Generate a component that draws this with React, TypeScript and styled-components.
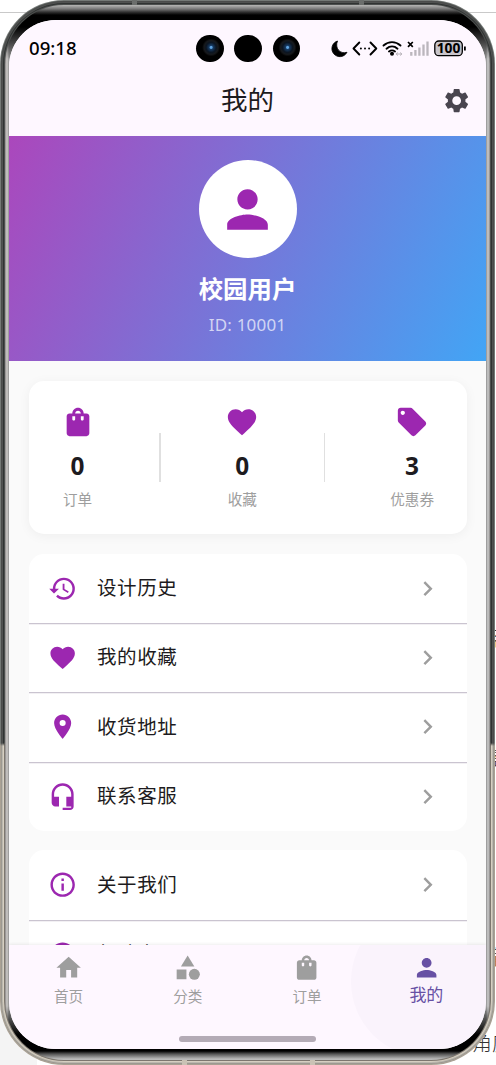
import React from "react";
import styled, { createGlobalStyle } from "styled-components";
import {
  MdPerson, MdShoppingBag, MdFavorite, MdLocalOffer, MdHistory, MdLocationOn,
  MdInfoOutline, MdHome, MdCategory, MdSettings, MdChevronRight, MdHelpOutline,
} from "react-icons/md";

const Global = createGlobalStyle`
  * { box-sizing: border-box; }
  body { margin: 0; background: #fff; overflow: hidden; font-family: "Noto Sans", "Noto Sans CJK SC", sans-serif; color: #1d1b20; }
  svg { display: block; flex: none; }
`;

const Desktop = styled.div`
  position: relative;
  width: 496px;
  height: 1065px;
  overflow: hidden;
  background: linear-gradient(#fff 12px, #c9c9c9 12px, #c9c9c9 13px, #fff 13px);
`;

const BackText = styled.span<{ $top: number; $left?: number }>`
  position: absolute;
  top: ${(p) => p.$top}px;
  left: ${(p) => p.$left ?? 491}px;
  font: 300 20px/24px "Noto Sans CJK SC", sans-serif;
  color: #333;
  white-space: nowrap;
`;

const BackPanel = styled.div`
  position: absolute;
  left: 0;
  bottom: 0;
  width: 37px;
  height: 320px;
  background: #f4f4f4;
`;

const Rim = styled.div`
  position: relative;
  width: 495px;
  height: 1065px;
  padding: 1px;
  border-radius: 64px;
  background: linear-gradient(#747976 0 743px, #aaa193 746px);
`;

const Metal = styled.div`
  height: 100%;
  padding: 3px;
  border-radius: 63px;
  background: linear-gradient(#303332 0 742px, #d6cfc1 745px);
  box-shadow: inset 0 0 0 1px rgba(60, 60, 60, 0.25), inset 0 0 0 2px rgba(140, 140, 140, 0.35);
`;

const Edge = styled.div`
  height: 100%;
  padding: 1px;
  border-radius: 60px;
  background: linear-gradient(#4c4f4e 0 738px, #7d776f 742px);
`;

const Glass = styled.div`
  height: 100%;
  padding: 15px 4px 11px;
  border-radius: 59px;
  background: linear-gradient(#b7b7b5, #777 4px, #333 7px, #000 10px, #000 22px, transparent 54px, transparent 1001px, #000 1030px, #000 1046px, #555 1049px, #bbb 1054px),
    linear-gradient(90deg, #8a8887, #d0cdcb 2px, #8f8f8f 4px, #8f8f8f calc(100% - 4px), #ccc calc(100% - 2px), #8a8887);
`;

const Antenna = styled.i<{ $x: number; $bottom?: boolean }>`
  position: absolute;
  left: ${(p) => p.$x}px;
  ${(p) => (p.$bottom ? "bottom: 0; background: #c9c2b4;" : "top: 0; background: #6b6e6c;")}
  width: 5px;
  height: 5px;
`;

const Screen = styled.div`
  height: 1029px;
  display: flex;
  flex-direction: column;
  overflow: hidden;
  border-radius: 47px;
  background: #fafafa;
`;

const StatusBar = styled.div`
  height: 57px;
  flex: none;
  display: grid;
  grid-template-columns: 187px 105px 1fr;
  align-items: center;
  padding-right: 20px;
  background: #fef7ff;
`;

const Clock = styled.div`
  padding: 0 0 2px 20px;
  font-size: 18.6px;
  font-weight: 500;
  line-height: 24px;
  color: #000;
`;

const Cameras = styled.div`
  display: flex;
  gap: 10.8px;
`;

const Lens = styled.i<{ $lit?: boolean }>`
  width: 27.5px;
  height: 27.5px;
  flex: none;
  border-radius: 50%;
  background: ${(p) => p.$lit
    ? "radial-gradient(circle at 54% 46%, #5fa3e0 0 1px, #173b63 2px, #0b1522 5px, #17191c 7px, #000 9px)"
    : "#000"};
`;

const Indicators = styled.div`
  display: flex;
  justify-content: flex-end;
  align-items: center;
  padding-bottom: 1px;
`;

const AppBar = styled.div`
  height: 58.5px;
  flex: none;
  display: grid;
  grid-template-columns: 60px 1fr 60px;
  align-items: center;
  background: #fef7ff;
  color: #49454f;
`;

const AppTitle = styled.h1`
  grid-column: 2;
  margin: 0 0 13px;
  text-align: center;
  font-size: 26.5px;
  line-height: 36px;
  font-weight: 400;
  color: #1d1b20;
`;

const SettingsButton = styled.div`
  margin: 0 0 11px 16px;
`;

const Profile = styled.section`
  height: 225.5px;
  flex: none;
  display: flex;
  flex-direction: column;
  align-items: center;
  padding-top: 24.5px;
  background: linear-gradient(115.3deg, #ab47bc, #42a5f5);
  color: #fff;
`;

const Avatar = styled.div`
  width: 98px;
  height: 98px;
  display: grid;
  place-items: center;
  border-radius: 50%;
  background: #fff;
  color: #9c27b0;
`;

const UserName = styled.div`
  margin-top: 14px;
  font-size: 24.4px;
  line-height: 34px;
  font-weight: 700;
`;

const UserId = styled.div`
  margin-top: 7px;
  font-size: 17px;
  line-height: 24px;
  letter-spacing: 0.2px;
  color: rgba(255, 255, 255, 0.7);
`;

const Content = styled.main`
  flex: 1;
  min-height: 0;
  overflow: hidden;
  display: flex;
  flex-direction: column;
  gap: 19.5px;
  padding: 19.5px 19.5px 0;
`;

const Stats = styled.section`
  height: 153.5px;
  flex: none;
  display: flex;
  justify-content: space-between;
  align-items: center;
  padding: 0 32.5px 0 32px;
  border-radius: 15px;
  background: #fff;
  box-shadow: 0 2px 12px rgba(0, 0, 0, 0.05);
`;

const Stat = styled.div`
  display: flex;
  flex-direction: column;
  align-items: center;
  color: #9c27b0;
`;

const StatValue = styled.b`
  margin-top: 9px;
  font-size: 24.4px;
  line-height: 35px;
  color: #1d1b20;
`;

const StatLabel = styled.span`
  margin-top: 5px;
  font-size: 14.6px;
  line-height: 22px;
  color: #9e9e9e;
`;

const StatDivider = styled.i`
  width: 1.2px;
  height: 49px;
  background: #e0e0e0;
`;

const Menu = styled.section`
  flex: none;
  border-radius: 15px;
  background: #fff;
  overflow: hidden;
`;

const MenuRow = styled.div`
  height: 69.35px;
  display: grid;
  grid-template-columns: 49px 1fr 30px;
  align-items: center;
  padding: 0 23.6px 0 19.5px;
  color: #9c27b0;
  & + & { box-shadow: inset 0 1.3px #cac4d0; }
`;

const MenuLabel = styled.span`
  margin-top: -1.6px;
  font-size: 19.5px;
  line-height: 29px;
  letter-spacing: 0.6px;
  color: #1d1b20;
`;

const Chevron = styled(MdChevronRight)`
  color: #9e9e9e;
`;

const TabBar = styled.nav`
  position: relative;
  height: 104.5px;
  flex: none;
  display: grid;
  grid-template-columns: repeat(4, 1fr);
  overflow: hidden;
  background: #fef7ff;
  box-shadow: 0 -1px 3px rgba(0, 0, 0, 0.07);
`;

const Tab = styled.div<{ $active?: boolean }>`
  position: relative;
  display: flex;
  flex-direction: column;
  align-items: center;
  padding-top: 8.5px;
  color: ${(p) => (p.$active ? "#6750a4" : "#9e9e9e")};
  font-size: ${(p) => (p.$active ? 17 : 14.6)}px;
  line-height: 24px;
`;

const TabLabel = styled.span<{ $active?: boolean }>`
  margin-top: ${(p) => (p.$active ? 1 : 1.5)}px;
`;

const Ripple = styled.i`
  position: absolute;
  top: -39px;
  right: -16px;
  width: 151px;
  height: 151px;
  border-radius: 50%;
  background: rgba(90, 80, 130, 0.025);
`;

const HomeHandle = styled.i`
  position: absolute;
  left: 170px;
  bottom: 7.5px;
  width: 137px;
  height: 6px;
  border-radius: 3px;
  background: #b4abb6;
`;

const Headset = ({ size }: { size: number }) => (
  <svg width={size} height={size} viewBox="0 0 24 24" fill="currentColor">
    <path d="M12 1a9 9 0 0 0-9 9v7c0 1.660 1.340 3 3 3h3v-8H5v-2c0-3.870 3.130-7 7-7s7 3.130 7 7v2h-4v8h4v1h-7v2h6c1.660 0 3-1.340 3-3V10a9 9 0 0 0-9-9z" />
  </svg>
);

const StatusGlyphs = () => (
  <svg width="138" height="22" viewBox="328 37 138 22">
    <path d="M337.500 41A8 8 0 1 0 347 52.300C340 54.500 334.500 48 337.500 41Z" fill="#000" stroke="#000" strokeWidth="0.800" strokeLinejoin="round" />
    <g fill="none" stroke="#000" strokeWidth="1.9" strokeLinecap="round" strokeLinejoin="round">
      <path d="m359.300 42.500-5.800 6 5.800 6M370.500 42.500l5.800 6-5.800 6" />
      <path d="M383.500 45.500c5-4.500 12-4.500 17 0M386.500 48.700c3.300-2.900 7.800-2.900 11 0M389 51.500c2-1.500 4-1.500 6 0" />
    </g>
    <g fill="#000"><circle cx="360.900" cy="48.500" r="1" /><circle cx="365" cy="48.500" r="1" /><circle cx="369.100" cy="48.500" r="1" /><circle cx="392" cy="53.800" r="2" /></g>
    <path d="M396 54h6m-4-1.500-2 1.500 2 1.500m2-3 2 1.500-2 1.500" stroke="#bbb6bd" fill="none" />
    <path d="m408 42 4.800 4.800m0-4.800-4.800 4.800" stroke="#000" strokeWidth="1.700" />
    <path d="M411.300 52v3.800M415.400 50v5.800M419.400 47.500v8.300M423.500 44.500v11.300M427.500 41.500v14.300" stroke="#bbb6bd" strokeWidth="2.300" />
    <rect x="434.800" y="41" width="27.500" height="14.700" rx="4" fill="#c8c4ca" stroke="#000" strokeWidth="1.300" />
    <path d="M464.900 46.500v4" stroke="#000" strokeWidth="1.800" />
    <text x="448.500" y="53.400" textAnchor="middle" fontFamily="Noto Sans" fontWeight="700" fontSize="13.800" fill="#000">100</text>
  </svg>
);

const stats = [
  { icon: MdShoppingBag, value: 0, label: "订单" },
  { icon: MdFavorite, value: 0, label: "收藏" },
  { icon: MdLocalOffer, value: 3, label: "优惠券" },
];

const menus = [
  [
    { icon: MdHistory, label: "设计历史" },
    { icon: MdFavorite, label: "我的收藏" },
    { icon: MdLocationOn, label: "收货地址" },
    { icon: Headset, label: "联系客服" },
  ],
  [
    { icon: MdInfoOutline, label: "关于我们" },
    { icon: MdHelpOutline, label: "帮助中心" },
  ],
];

const tabs = [
  { icon: MdHome, label: "首页" },
  { icon: MdCategory, label: "分类" },
  { icon: MdShoppingBag, label: "订单" },
  { icon: MdPerson, label: "我的", active: true },
];

export default function App() {
  return (
    <Desktop>
      <Global />
      <BackPanel />
      <BackText $top={626}>客</BackText>
      <BackText $top={745}>善</BackText>
      <BackText $top={945}>管</BackText>
      <BackText $top={1031} $left={472}>角度</BackText>
      <Rim><Metal><Edge><Glass>
        <Screen>
          <StatusBar>
            <Clock>09:18</Clock>
            <Cameras><Lens $lit /><Lens /><Lens $lit /></Cameras>
            <Indicators><StatusGlyphs /></Indicators>
          </StatusBar>
          <AppBar>
            <AppTitle>我的</AppTitle>
            <SettingsButton><MdSettings size={29.3} /></SettingsButton>
          </AppBar>
          <Profile>
            <Avatar><MdPerson size={61} /></Avatar>
            <UserName>校园用户</UserName>
            <UserId>ID: 10001</UserId>
          </Profile>
          <Content>
            <Stats>
              {stats.map(({ icon: Icon, value, label }, i) => (
                <React.Fragment key={label}>
                  {i > 0 && <StatDivider />}
                  <Stat>
                    <Icon size={34} />
                    <StatValue>{value}</StatValue>
                    <StatLabel>{label}</StatLabel>
                  </Stat>
                </React.Fragment>
              ))}
            </Stats>
            {menus.map((rows, i) => (
              <Menu key={i}>
                {rows.map(({ icon: Icon, label }) => (
                  <MenuRow key={label}>
                    <Icon size={29.3} />
                    <MenuLabel>{label}</MenuLabel>
                    <Chevron size={29.3} />
                  </MenuRow>
                ))}
              </Menu>
            ))}
          </Content>
          <TabBar>
            <Ripple />
            {tabs.map(({ icon: Icon, label, active }) => (
              <Tab key={label} $active={active}>
                <Icon size={29.3} />
                <TabLabel $active={active}>{label}</TabLabel>
              </Tab>
            ))}
            <HomeHandle />
          </TabBar>
        </Screen>
      </Glass></Edge></Metal>
        <Antenna $x={132} />
        <Antenna $x={359} />
        <Antenna $x={182} $bottom />
        <Antenna $x={310} $bottom />
      </Rim>
    </Desktop>
  );
}
